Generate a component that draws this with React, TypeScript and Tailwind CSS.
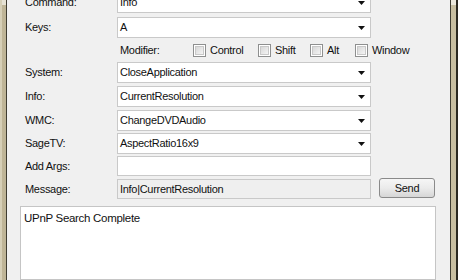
import React from 'react';

function Arrow() {
  return (
    <svg width="7" height="4" viewBox="0 0 7 4" className="shrink-0">
      <path d="M0 0H7L3.5 4Z" fill="#111" />
    </svg>
  );
}

function Combo({ value }: { value: string }) {
  return (
    <div className="flex h-[21px] w-[254px] items-center justify-between border border-[#c9c9c9] bg-white pl-[2px] pr-[5px]">
      <span>{value}</span>
      <Arrow />
    </div>
  );
}

function Check({ label, width }: { label: string; width: string }) {
  return (
    <div className={`flex items-center ${width}`}>
      <div className="flex h-[13px] w-[13px] items-center justify-center border border-[#8e8f8f] bg-white">
        <div className="h-[9px] w-[9px] border border-[#c8c8c8] bg-gradient-to-br from-[#d8d8d8] to-[#f4f4f4]" />
      </div>
      <span className="ml-[4px]">{label}</span>
    </div>
  );
}

function Row({
  label,
  className = '',
  children,
}: {
  label: string;
  className?: string;
  children: React.ReactNode;
}) {
  return (
    <div className={`flex items-center ${className}`}>
      <span className="w-[92px] shrink-0">{label}</span>
      {children}
    </div>
  );
}

export default function App() {
  return (
    <div className="flex h-[280px] w-[458px] overflow-hidden bg-[#f0f0f0] font-['Liberation_Sans',Arial,sans-serif] text-[11px] tracking-[-0.3px] text-[#111]">
      {/* Left window frame */}
      <div className="flex h-full shrink-0">
        <div className="w-[2px] bg-[#d6cfb7]" />
        <div className="flex w-[4px] flex-col bg-[#bfb597]">
          <div className="h-[5px] bg-[#e6e2d4]" />
        </div>
        <div className="w-px bg-[#3f3c31]" />
      </div>

      {/* Form */}
      <div className="flex flex-1 flex-col pl-[18px]">
        <Row label="Command:" className="-mt-[8px]">
          <Combo value="Info" />
        </Row>
        <Row label="Keys:" className="mt-[4px]">
          <Combo value="A" />
        </Row>
        <div className="flex h-[24px] items-center pl-[95px]">
          <span className="w-[73px] shrink-0">Modifier:</span>
          <Check label="Control" width="w-[65px]" />
          <Check label="Shift" width="w-[52px]" />
          <Check label="Alt" width="w-[45px]" />
          <Check label="Window" width="" />
        </div>
        <Row label="System:">
          <Combo value="CloseApplication" />
        </Row>
        <Row label="Info:" className="mt-[3px]">
          <Combo value="CurrentResolution" />
        </Row>
        <Row label="WMC:" className="mt-[3px]">
          <Combo value="ChangeDVDAudio" />
        </Row>
        <Row label="SageTV:" className="mt-[2px]">
          <Combo value="AspectRatio16x9" />
        </Row>
        <Row label="Add Args:" className="mt-[2px]">
          <div className="h-[20px] w-[254px] border border-[#c9c9c9] bg-white" />
        </Row>
        <Row label="Message:" className="mt-[3px]">
          <div className="flex h-[20px] w-[254px] items-center border border-[#c9c9c9] bg-[#efefef] pl-[2px]">
            Info|CurrentResolution
          </div>
          <button className="-mt-[2px] ml-[8px] flex h-[20px] w-[56px] items-center justify-center rounded-[3px] border border-[#8a8a8a] bg-gradient-to-b from-[#f6f6f6] via-[#ebebeb] to-[#d6d6d6] pt-px">
            Send
          </button>
        </Row>
        <div className="-ml-[5px] mt-[7px] w-[416px] flex-1 border border-[#c5c5c5] bg-white px-[3px] pt-[3px] text-[11.5px]">
          UPnP Search Complete
        </div>
      </div>

      {/* Right window frame */}
      <div className="ml-[13px] flex h-full shrink-0">
        <div className="w-px bg-[#3f3c31]" />
        <div className="flex w-[5px] flex-col bg-[#c7bea0]">
          <div className="h-[5px] bg-[#ebe8dc]" />
        </div>
        <div className="w-[2px] bg-[#2a2820]" />
      </div>
    </div>
  );
}
